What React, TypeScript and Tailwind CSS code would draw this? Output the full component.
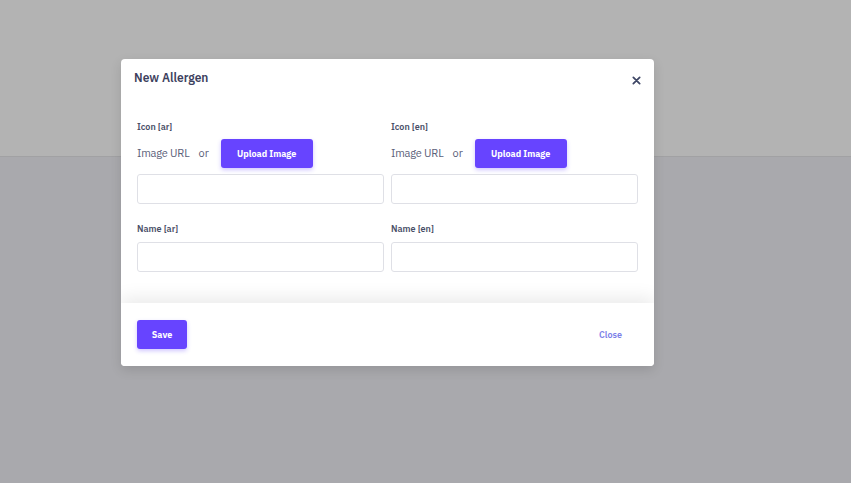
import React from "react";

const font = { fontFamily: '"IBM Plex Sans", "Noto Sans", Roboto, sans-serif' };

function IconField({ label }: { label: string }) {
  return (
    <div className="flex flex-col">
      <div className="h-[12px] text-[9px] leading-[12px] font-semibold text-[#4a4f68]">{label}</div>
      <div className="mt-[6px] flex h-[29px] items-center">
        <span className="text-[11px] tracking-[-0.2px] text-[#5b6079]">Image URL</span>
        <span className="ml-[9px] text-[11px] text-[#5b6079]">or</span>
        <button className="ml-[12px] h-[29px] w-[92px] rounded-[3px] bg-[#6744ff] text-[9px] font-bold text-white shadow-[0_2px_4px_rgba(103,68,255,0.3)]">
          Upload Image
        </button>
      </div>
      <input className="mt-[6px] h-[30px] w-full rounded-[3px] border border-[#dfe0e6] bg-white outline-none" />
    </div>
  );
}

function NameField({ label }: { label: string }) {
  return (
    <div className="flex flex-col">
      <div className="h-[12px] text-[9px] leading-[12px] font-semibold text-[#4a4f68]">{label}</div>
      <input className="mt-[7px] h-[30px] w-full rounded-[3px] border border-[#dfe0e6] bg-white outline-none" />
    </div>
  );
}

export default function App() {
  return (
    <div className="relative h-[483px] w-[851px] overflow-hidden bg-[#a9a9ad]" style={font}>
      <div className="h-[157px] border-b border-[#a1a1a3] bg-[#b3b3b3]" />
      <div className="absolute left-[121px] top-[59px] flex w-[533px] flex-col overflow-hidden rounded-[4px] bg-white shadow-[0_4px_12px_rgba(0,0,0,0.12)]">
        <div className="flex h-[46px] items-start justify-between px-[13px] pt-[11px]">
          <div className="text-[12px] leading-[16px] font-semibold text-[#3d415e]">New Allergen</div>
          <svg className="mt-[6px]" width="9" height="9" viewBox="0 0 10 10">
            <path d="M1.5 1.5 L8.5 8.5 M8.5 1.5 L1.5 8.5" stroke="#3f4766" strokeWidth="2" strokeLinecap="round" />
          </svg>
        </div>
        <div className="px-4 pt-[16px] pb-[31px]">
          <div className="grid grid-cols-2 gap-x-[7px]">
            <IconField label="Icon [ar]" />
            <IconField label="Icon [en]" />
          </div>
          <div className="mt-[19px] grid grid-cols-2 gap-x-[7px]">
            <NameField label="Name [ar]" />
            <NameField label="Name [en]" />
          </div>
        </div>
        <div className="relative flex h-[63px] items-start justify-between bg-white px-4 pt-[17px] shadow-[0_-6px_16px_rgba(0,0,0,0.08)]">
          <button className="h-[29px] w-[50px] rounded-[3px] bg-[#6744ff] text-[9px] font-bold text-white shadow-[0_2px_4px_rgba(103,68,255,0.3)]">
            Save
          </button>
          <button className="mr-[16px] mt-[8px] text-[9px] leading-[14px] font-semibold text-[#7b80e8]">Close</button>
        </div>
      </div>
    </div>
  );
}
